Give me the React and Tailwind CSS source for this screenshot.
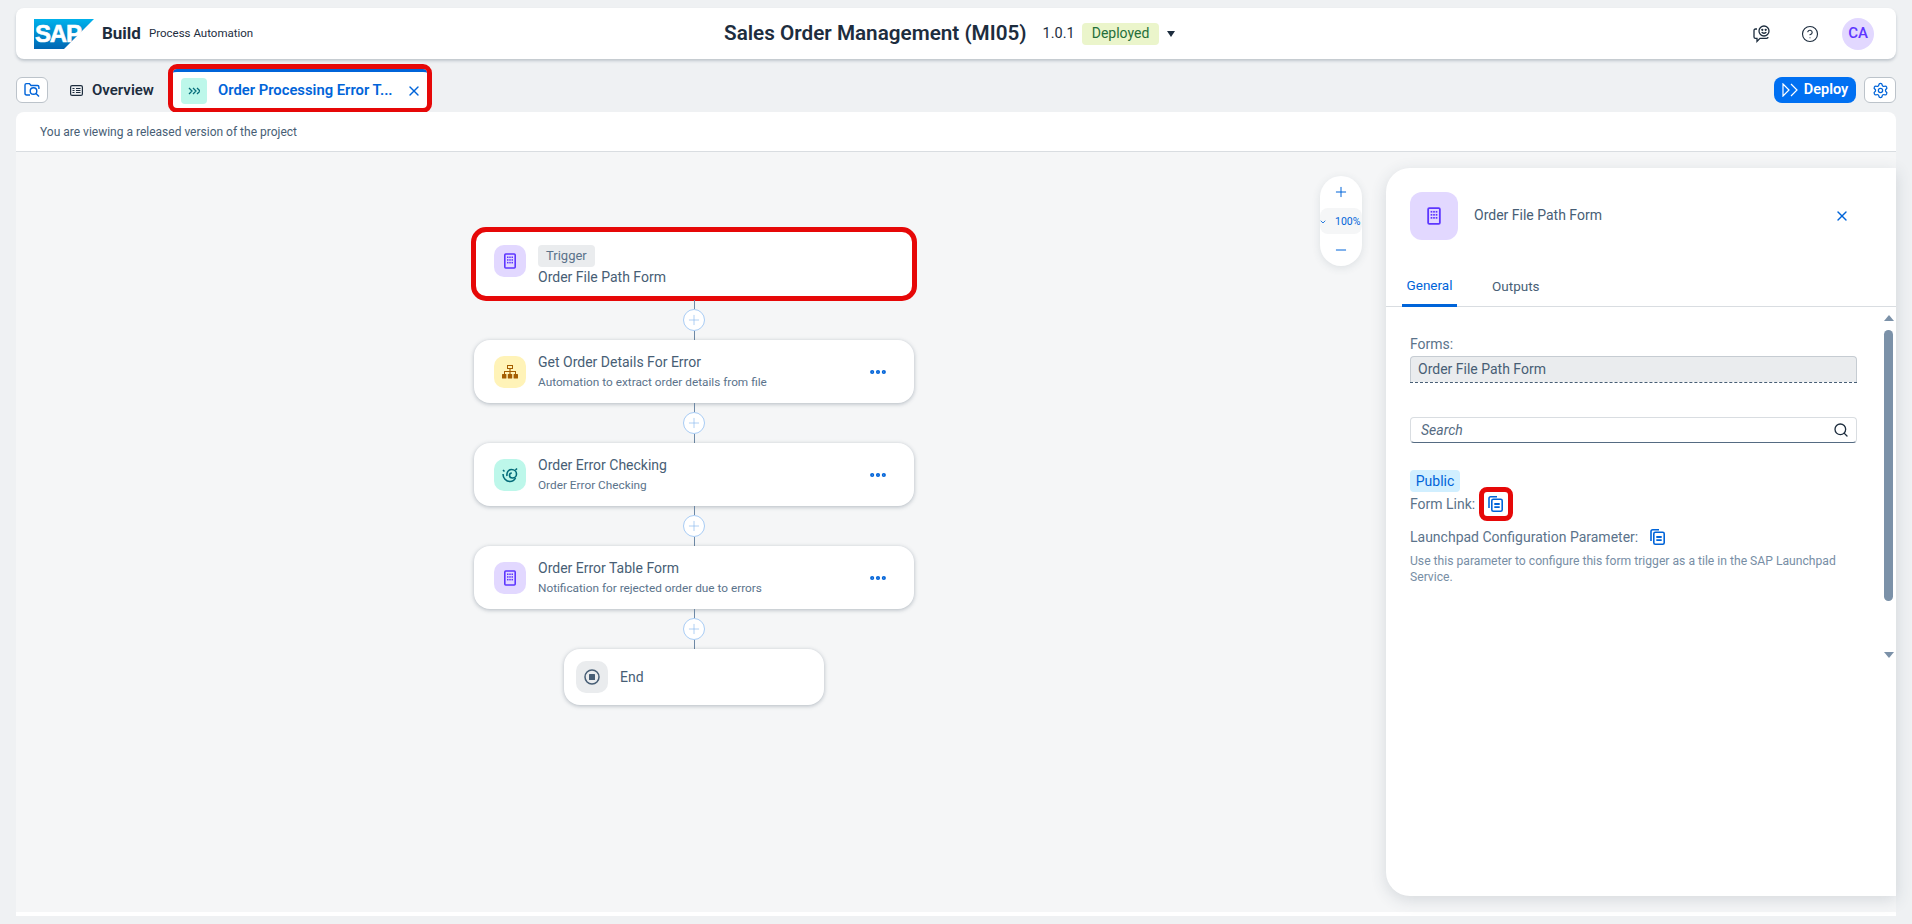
import { ChevronDown, Plus, Minus, Search, X, MoreHorizontal, Settings, CircleHelp } from 'lucide-react';

const FormIcon = ({ size = 16 }) => (
    <svg width={size} height={size} viewBox="0 0 16 16" fill="none">
        <rect x="2.800" y="1" width="10.400" height="14" rx="1" stroke="#5d36ff" strokeWidth="1.600" />
        <g fill="#5d36ff">
            <rect x="5" y="3.500" width="1.500" height="1.500" /><rect x="7.250" y="3.500" width="1.500" height="1.500" /><rect x="9.500" y="3.500" width="1.500" height="1.500" />
            <rect x="5" y="6.200" width="1.500" height="1.500" /><rect x="7.250" y="6.200" width="1.500" height="1.500" /><rect x="9.500" y="6.200" width="1.500" height="1.500" />
            <rect x="5" y="8.900" width="1.500" height="1.500" /><rect x="7.250" y="8.900" width="1.500" height="1.500" /><rect x="9.500" y="8.900" width="1.500" height="1.500" />
        </g>
    </svg>
);

const OrgIcon = () => (
    <svg width="16" height="16" viewBox="0 0 16 16" fill="#a45d00">
        <path d="M5 1h6v4H8.600v2H14v3h-1V8H8.600v2H7.400V8H3v2H2V7h5.400V5H5V1zm1 1v2h4V2H6z" />
        <rect x="0" y="10" width="4.400" height="4.400" rx=".5" /><rect x="5.800" y="10" width="4.400" height="4.400" rx=".5" /><rect x="11.600" y="10" width="4.400" height="4.400" rx=".5" />
    </svg>
);

const DecisionIcon = () => (
    <svg width="16" height="16" viewBox="0 0 16 16" fill="none" stroke="#046c7a" strokeWidth="1.600">
        <path d="M1 3l1.500 1.500M15 1.500l-1.500 1.500" />
        <path d="M1 7c0 4 3 7.500 7 7.500 2.500 0 4.500-1.500 5.500-3.500" />
        <path d="M5 9c-.5-3 1-6.500 4.500-6.500 3 0 5 2 5 4.500 0 2.500-2 4-4 4-2 0-3-1.300-3-2.700 0-1.300 1-2.300 2.300-2.300" />
    </svg>
);

const CopyIcon = () => (
    <svg width="16" height="16" viewBox="0 0 16 16" fill="none" stroke="#0064d9" strokeWidth="1.600">
        <path d="M1 12V2.500C1 1.500 1.700.8 2.700.8H9" />
        <rect x="3.800" y="3.300" width="10.400" height="11.900" rx="1.500" />
        <path d="M6.300 8h5.400M6.300 11.200h5.400" strokeWidth="1.800" />
    </svg>
);

const Connector = () => (
    <div className="flex h-10 flex-col items-center">
        <div className="h-[9px] w-px bg-[#6d88a5]" />
        <button className="flex h-[22px] w-[22px] items-center justify-center rounded-full border border-[#a8ccf5] bg-white">
            <Plus size={16} strokeWidth={1} className="text-[#89b8ef]" />
        </button>
        <div className="h-[9px] w-px bg-[#6d88a5]" />
    </div>
);

const StepCard = ({ icon, iconBg, title, subtitle }) => (
    <div className="flex h-[63px] w-[440px] items-center rounded-2xl bg-white pl-5 pr-5 shadow-[0_1px_4px_rgba(50,70,90,0.35)]">
        <div className={`flex h-8 w-8 shrink-0 items-center justify-center rounded-[10px] ${iconBg}`}>{icon}</div>
        <div className="ml-3 flex-1">
            <div className="text-[14px] leading-[20px] text-[#475e75]">{title}</div>
            <div className="mt-[1px] text-[11.800px] leading-[18px] text-[#5b738b]">{subtitle}</div>
        </div>
        <MoreHorizontal size={20} strokeWidth={3} className="mr-[6px] text-[#0064d9]" />
    </div>
);

export default function App() {
    return (
        <div className="flex h-[924px] w-[1912px] flex-col overflow-hidden bg-[#eff1f3] px-4 py-2 font-['Roboto','Noto_Sans',sans-serif] text-[#1d2d3e]">
            {/* shell bar */}
            <header className="relative z-10 flex h-[51px] shrink-0 items-center justify-between rounded-lg bg-white pl-[18px] pr-[22px] shadow-[0_2px_3px_rgba(50,70,90,0.25)]">
                <div className="flex items-center">
                    <svg width="60" height="30" viewBox="0 0 60 30">
                        <defs>
                            <linearGradient id="sap" x1="0" y1="0" x2="0" y2="1">
                                <stop offset="0" stopColor="#00b1eb" />
                                <stop offset="1" stopColor="#0066b3" />
                            </linearGradient>
                        </defs>
                        <polygon points="0,0 60,0 30,30 0,30" fill="url(#sap)" />
                        <text x="1" y="23" fill="#fff" stroke="#fff" strokeWidth=".6" fontSize="24" fontWeight="700" fontFamily="Liberation Sans, sans-serif" letterSpacing="-1.200">SAP</text>
                    </svg>
                    <span className="ml-2 text-[17px] font-bold">Build</span>
                    <span className="ml-2 text-[11.500px]">Process Automation</span>
                </div>
                <div className="absolute left-[708px] mt-[1px] flex items-center">
                    <span className="text-[20.700px] font-semibold">Sales Order Management (MI05)</span>
                    <span className="ml-4 text-[14.500px]">1.0.1</span>
                    <span className="ml-[7px] flex h-[22px] items-center rounded bg-[#ebf5cb] px-[10px] text-[14px] text-[#256f3a]">Deployed</span>
                    <span className="ml-2 h-0 w-0 border-x-[4px] border-t-[6px] border-x-transparent border-t-[#1d2d3e]" />
                </div>
                <div className="flex items-center">
                    <svg width="18" height="18" viewBox="0 0 18 18" fill="none" stroke="#1d2d3e" strokeWidth="1.300">
                        <path d="M4 4H2.500C1.500 4 1 4.700 1 5.500V12c0 .8.600 1.400 1.500 1.400H4v3l3-3h6.500c1 0 1.500-.6 1.500-1.400" />
                        <circle cx="11" cy="6" r="5" />
                        <path d="M8.700 7.200c1 1.400 3.600 1.400 4.600 0" />
                        <circle cx="9.300" cy="4.800" r=".5" fill="#1d2d3e" />
                        <circle cx="12.700" cy="4.800" r=".5" fill="#1d2d3e" />
                    </svg>
                    <CircleHelp size={18} strokeWidth={1.500} className="ml-[30px]" />
                    <div className="ml-[23px] flex h-8 w-8 items-center justify-center rounded-full bg-[#e2d8ff] text-[15px] font-medium text-[#5d36ff]">CA</div>
                </div>
            </header>

            {/* tab row */}
            <div className="mt-[5px] flex h-[48px] shrink-0 items-center pt-1">
                <button className="flex h-[26px] w-8 items-center justify-center rounded-md border border-[#bcc3ca] bg-white">
                    <svg width="16" height="16" viewBox="0 0 16 16" fill="none" stroke="#0064d9" strokeWidth="1.400">
                        <path d="M6 13H2.500C1.500 13 1 12.400 1 11.500V3c0-.8.500-1.400 1.400-1.400h3L7 3.500h6.500c.8 0 1.400.5 1.400 1.400V7" />
                        <circle cx="9.500" cy="9" r="3.300" />
                        <path d="M12 11.500l3 3" />
                    </svg>
                </button>
                <div className="ml-[22px] flex w-[89px] items-center">
                    <svg width="13" height="11" viewBox="0 0 13 11" fill="none" stroke="#1d2d3e" strokeWidth="1.200">
                        <rect x=".6" y=".6" width="11.800" height="9.800" rx="1.500" />
                        <path d="M2.500 3.500h2M6 3.500h4.500M2.500 5.500h2M6 5.500h4.500M2.500 7.500h2M6 7.500h4.500" />
                    </svg>
                    <span className="ml-[9px] text-[15px] font-semibold">Overview</span>
                </div>
                <div className="-mt-[3px] ml-[14px] flex h-[39px] w-[254px] items-center rounded-sm border-t-[3px] border-[#0064d9] bg-white pl-[8px] pt-[1px] outline-[5px] outline-[#e60808]">
                    <div className="flex h-[26px] w-[26px] items-center justify-center rounded bg-[#bdf7ea]">
                        <svg width="12" height="8" viewBox="0 0 12 8" fill="none" stroke="#046c7a" strokeWidth="1.300">
                            <path d="M1 1l3 3-3 3M5 1l3 3-3 3M9 1l3 3-3 3" />
                        </svg>
                    </div>
                    <span className="ml-[11px] text-[14.800px] font-semibold text-[#0064d9]">Order Processing Error T...</span>
                    <X size={16} strokeWidth={2} className="ml-auto mr-[5px] text-[#0064d9]" />
                </div>
                <button className="ml-auto flex h-[26px] w-[82px] items-center justify-center gap-[6px] rounded-lg bg-[#0070f2] text-[14.500px] font-semibold text-white">
                    <svg width="16" height="14" viewBox="0 0 16 14" fill="none" stroke="#fff" strokeWidth="1.200">
                        <path d="M1 1l6 6-6 6zM9 1l6 6-6 6" />
                    </svg>
                    Deploy
                </button>
                <button className="ml-2 flex h-[26px] w-8 items-center justify-center rounded-md border border-[#bcc3ca] bg-white">
                    <Settings size={17} strokeWidth={1.800} className="text-[#0064d9]" />
                </button>
            </div>

            {/* page */}
            <main className="flex min-h-0 flex-1 flex-col rounded-t-lg bg-white pb-1">
                <div className="flex h-10 shrink-0 items-center border-b border-[#d9dde1] pl-6 text-[12px] text-[#475e75]">
                    You are viewing a released version of the project
                </div>
                <div className="flex min-h-0 flex-1 items-start bg-[#f5f6f7] pb-4 pt-4">
                    {/* flow */}
                    <div className="ml-[458px] mt-[62px] flex w-[440px] flex-col items-center">
                        <div className="mb-[2px] flex h-[68px] w-[440px] items-start rounded-xl border-y border-[#0064d9] bg-white pl-5 pt-[14px] outline-[5px] -outline-offset-[2px] outline-[#e60808]">
                            <div className="flex h-8 w-8 items-center justify-center rounded-[10px] bg-[#e2d8ff]"><FormIcon /></div>
                            <div className="ml-3">
                                <span className="flex h-[22px] w-fit items-center rounded-sm bg-[#eaecee] px-2 text-[13px] text-[#5b738b]">Trigger</span>
                                <div className="text-[14px] leading-[20px] text-[#475e75]">Order File Path Form</div>
                            </div>
                        </div>
                        <Connector />
                        <StepCard icon={<OrgIcon />} iconBg="bg-[#fff3b8]" title="Get Order Details For Error" subtitle="Automation to extract order details from file" />
                        <Connector />
                        <StepCard icon={<DecisionIcon />} iconBg="bg-[#bdf7ea]" title="Order Error Checking" subtitle="Order Error Checking" />
                        <Connector />
                        <StepCard icon={<FormIcon />} iconBg="bg-[#e2d8ff]" title="Order Error Table Form" subtitle="Notification for rejected order due to errors" />
                        <Connector />
                        <div className="flex h-14 w-[260px] items-center rounded-2xl bg-white pl-3 shadow-[0_1px_4px_rgba(50,70,90,0.35)]">
                            <div className="flex h-8 w-8 items-center justify-center rounded-[10px] bg-[#eaecee]">
                                <svg width="16" height="16" viewBox="0 0 16 16" fill="none">
                                    <circle cx="8" cy="8" r="7" stroke="#475e75" strokeWidth="1.500" />
                                    <rect x="5" y="5" width="6" height="6" rx=".5" fill="#475e75" />
                                </svg>
                            </div>
                            <span className="ml-3 text-[14px] text-[#475e75]">End</span>
                        </div>
                    </div>

                    {/* zoom control */}
                    <div className="ml-auto mr-6 mt-2 flex h-[90px] w-[42px] flex-col items-center rounded-full bg-white shadow-[0_2px_8px_rgba(50,70,90,0.12)]">
                        <Plus size={16} strokeWidth={1.500} className="mt-2 text-[#0064d9]" />
                        <div className="mt-2 flex h-[26px] w-[42px] items-center whitespace-nowrap rounded-lg bg-[#f5f6f7] pt-[2px] text-[10.500px] text-[#0064d9]">
                            <ChevronDown size={8} strokeWidth={2.500} className="-ml-[1px] mr-[8px] shrink-0" />
                            100%
                        </div>
                        <Minus size={16} strokeWidth={1.500} className="mt-2 text-[#0064d9]" />
                    </div>

                    {/* details panel */}
                    <aside className="flex h-full w-[510px] shrink-0 flex-col rounded-l-3xl bg-white shadow-[0_4px_16px_rgba(50,70,90,0.16)]">
                        <div className="flex shrink-0 items-center pl-6 pr-[46px] pt-6">
                            <div className="flex h-12 w-12 items-center justify-center rounded-xl bg-[#e2d8ff]"><FormIcon size={18} /></div>
                            <span className="ml-4 -mt-[1px] text-[14px] text-[#475e75]">Order File Path Form</span>
                            <X size={16} strokeWidth={2} className="ml-auto text-[#0064d9]" />
                        </div>
                        <div className="mt-[26px] flex h-[41px] shrink-0 border-b border-[#d9dde1] pl-4 text-[13.500px]">
                            <div className="flex h-[41px] w-[55px] items-center justify-center border-b-[3px] border-[#0064d9] text-[#0064d9]">General</div>
                            <div className="ml-[35px] flex h-[40px] items-center text-[#475e75]">Outputs</div>
                        </div>
                        <div className="flex min-h-0 flex-1">
                            <div className="ml-6 w-[447px] text-[14px] text-[#5b738b]">
                                <label className="mt-[27px] block leading-[20px]">Forms:</label>
                                <div className="mt-[2px] flex h-[26px] items-center rounded-t border border-b-0 border-[#c6ccd2] bg-[#eaecee] px-[7px] text-[#475e75]">Order File Path Form</div>
                                <div className="border-t border-dashed border-[#475e75]" />
                                <div className="mt-[34px] flex h-[26px] items-center rounded border border-[#d9dde1] border-b-[#556b82] bg-white pl-[10px] pr-[7px]">
                                    <span className="flex-1 italic text-[#556b82]">Search</span>
                                    <Search size={16} strokeWidth={2} className="text-[#1d2d3e]" />
                                </div>
                                <span className="mt-[27px] flex h-[22px] w-[50px] items-center justify-center rounded bg-[#d1efff] text-[#0064d9]">Public</span>
                                <div className="flex h-[24px] items-center">
                                    Form Link:
                                    <button className="ml-2 flex h-[26px] w-[26px] items-center justify-center rounded-sm bg-white outline-[5px] -outline-offset-[1px] outline-[#e60808]"><CopyIcon /></button>
                                </div>
                                <div className="mt-[9px] flex h-[24px] items-center">
                                    Launchpad Configuration Parameter:
                                    <span className="ml-3"><CopyIcon /></span>
                                </div>
                                <p className="mt-[4px] text-[12.150px] leading-[16px] text-[#778ea5]">Use this parameter to configure this form trigger as a tile in the SAP Launchpad Service.</p>
                            </div>
                            {/* scrollbar */}
                            <div className="ml-[27px] mt-2 flex w-[9px] flex-col items-center">
                                <span className="h-0 w-0 border-x-[5px] border-b-[6px] border-x-transparent border-b-[#7b91a8]" />
                                <div className="mt-[9px] h-[271px] w-[9px] shrink-0 rounded-full bg-[#7b91a8]" />
                                <span className="mt-[51px] h-0 w-0 border-x-[5px] border-t-[6px] border-x-transparent border-t-[#7b91a8]" />
                            </div>
                        </div>
                    </aside>
                </div>
            </main>
        </div>
    );
}
